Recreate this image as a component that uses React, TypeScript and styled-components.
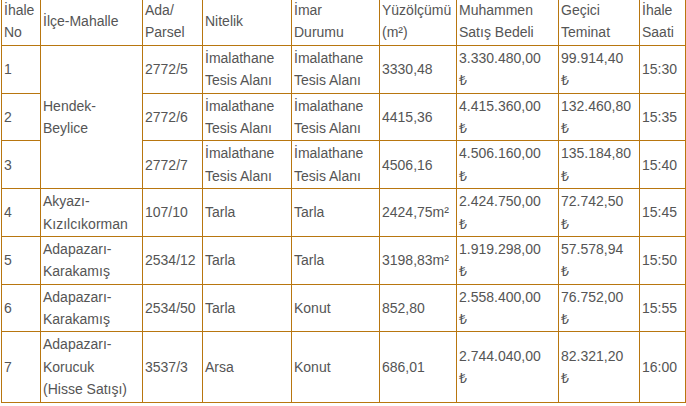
import styled, { createGlobalStyle } from "styled-components";

const GlobalStyle = createGlobalStyle`
  body {
    margin: 0;
    background: #ffffff;
  }
`;

type Lot = {
  no: string;
  district?: string[];
  span?: number;
  parcel: string;
  quality: string[];
  zoning: string[];
  area: string;
  price: string;
  deposit: string;
  time: string;
};

const lots: Lot[] = [
  {
    no: "1",
    district: ["Hendek-", "Beylice"],
    span: 3,
    parcel: "2772/5",
    quality: ["İmalathane", "Tesis Alanı"],
    zoning: ["İmalathane", "Tesis Alanı"],
    area: "3330,48",
    price: "3.330.480,00",
    deposit: "99.914,40",
    time: "15:30",
  },
  {
    no: "2",
    parcel: "2772/6",
    quality: ["İmalathane", "Tesis Alanı"],
    zoning: ["İmalathane", "Tesis Alanı"],
    area: "4415,36",
    price: "4.415.360,00",
    deposit: "132.460,80",
    time: "15:35",
  },
  {
    no: "3",
    parcel: "2772/7",
    quality: ["İmalathane", "Tesis Alanı"],
    zoning: ["İmalathane", "Tesis Alanı"],
    area: "4506,16",
    price: "4.506.160,00",
    deposit: "135.184,80",
    time: "15:40",
  },
  {
    no: "4",
    district: ["Akyazı-", "Kızılcıkorman"],
    parcel: "107/10",
    quality: ["Tarla"],
    zoning: ["Tarla"],
    area: "2424,75m²",
    price: "2.424.750,00",
    deposit: "72.742,50",
    time: "15:45",
  },
  {
    no: "5",
    district: ["Adapazarı-", "Karakamış"],
    parcel: "2534/12",
    quality: ["Tarla"],
    zoning: ["Tarla"],
    area: "3198,83m²",
    price: "1.919.298,00",
    deposit: "57.578,94",
    time: "15:50",
  },
  {
    no: "6",
    district: ["Adapazarı-", "Karakamış"],
    parcel: "2534/50",
    quality: ["Tarla"],
    zoning: ["Konut"],
    area: "852,80",
    price: "2.558.400,00",
    deposit: "76.752,00",
    time: "15:55",
  },
  {
    no: "7",
    district: ["Adapazarı-", "Korucuk", "(Hisse Satışı)"],
    parcel: "3537/3",
    quality: ["Arsa"],
    zoning: ["Konut"],
    area: "686,01",
    price: "2.744.040,00",
    deposit: "82.321,20",
    time: "16:00",
  },
];

const columns = [39, 102, 60, 89, 88, 77, 102, 81, 46];

const headers: string[][] = [
  ["İhale", "No"],
  ["İlçe-Mahalle"],
  ["Ada/", "Parsel"],
  ["Nitelik"],
  ["İmar", "Durumu"],
  ["Yüzölçümü", "(m²)"],
  ["Muhammen", "Satış Bedeli"],
  ["Geçici", "Teminat"],
  ["İhale", "Saati"],
];

const Lines = ({ parts }: { parts: string[] }) => (
  <>
    {parts.map((p, i) => (
      <span key={i}>
        {i > 0 && <br />}
        {p}
      </span>
    ))}
  </>
);

export default function App() {
  return (
    <>
      <GlobalStyle />
      <AuctionTable>
        <colgroup>
          {columns.map((w, i) => (
            <col key={i} style={{ width: w }} />
          ))}
        </colgroup>
        <thead>
          <tr>
            {headers.map((h, i) => (
              <HeadCell key={i}>
                <Lines parts={h} />
              </HeadCell>
            ))}
          </tr>
        </thead>
        <tbody>
          {lots.map((lot) => (
            <tr key={lot.no}>
              <Cell>{lot.no}</Cell>
              {lot.district && (
                <Cell rowSpan={lot.span}>
                  <Lines parts={lot.district} />
                </Cell>
              )}
              <Cell>{lot.parcel}</Cell>
              <Cell>
                <Lines parts={lot.quality} />
              </Cell>
              <Cell>
                <Lines parts={lot.zoning} />
              </Cell>
              <Cell>{lot.area}</Cell>
              <Cell>
                <Lines parts={[lot.price, "₺"]} />
              </Cell>
              <Cell>
                <Lines parts={[lot.deposit, "₺"]} />
              </Cell>
              <Cell>{lot.time}</Cell>
            </tr>
          ))}
        </tbody>
      </AuctionTable>
    </>
  );
}

const AuctionTable = styled.table`
  margin: -3px 0 0 1px;
  width: 685px;
  table-layout: fixed;
  border-collapse: collapse;
  font-family: "Liberation Sans", Arial, sans-serif;
  font-size: 14px;
  line-height: 1.6;
  color: #555555;
`;

const Cell = styled.td`
  border: 1px solid #b8760f;
  padding: 1px 2px;
  vertical-align: middle;
  text-align: left;
  white-space: nowrap;
`;

const HeadCell = styled.th`
  border: 1px solid #b8760f;
  padding: 1px 2px;
  vertical-align: middle;
  text-align: left;
  font-weight: normal;
  white-space: nowrap;
`;
